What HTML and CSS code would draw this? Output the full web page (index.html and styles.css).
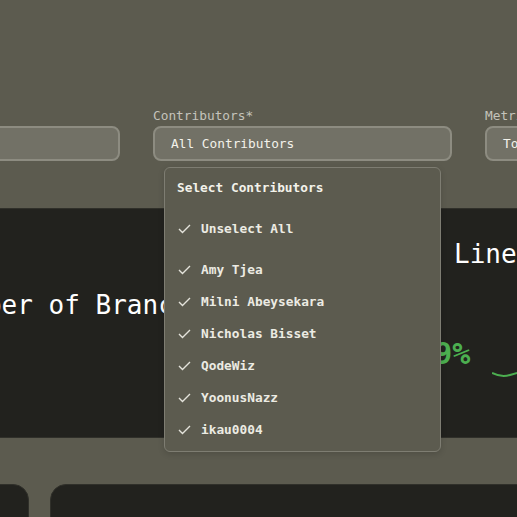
FILE: index.html
```html
<!DOCTYPE html>
<html>
<head>
<meta charset="utf-8">
<link rel="stylesheet" href="styles.css">
</head>
<body>
<div class="page">
  <div class="filters">
    <div class="field">
      <div class="label">Repository*</div>
      <div class="input">All Repositories</div>
    </div>
    <div class="field field-open">
      <div class="label">Contributors*</div>
      <div class="input">All Contributors</div>
      <div class="dropdown">
        <div class="dd-title">Select Contributors</div>
        <div class="dd-item dd-all"><svg class="check" viewBox="0 0 13 10" width="13" height="10"><polyline points="1,5 4.5,8.5 12,1"/></svg>Unselect All</div>
        <div class="dd-list">
          <div class="dd-item"><svg class="check" viewBox="0 0 13 10" width="13" height="10"><polyline points="1,5 4.5,8.5 12,1"/></svg>Amy Tjea</div>
          <div class="dd-item"><svg class="check" viewBox="0 0 13 10" width="13" height="10"><polyline points="1,5 4.5,8.5 12,1"/></svg>Milni Abeysekara</div>
          <div class="dd-item"><svg class="check" viewBox="0 0 13 10" width="13" height="10"><polyline points="1,5 4.5,8.5 12,1"/></svg>Nicholas Bisset</div>
          <div class="dd-item"><svg class="check" viewBox="0 0 13 10" width="13" height="10"><polyline points="1,5 4.5,8.5 12,1"/></svg>QodeWiz</div>
          <div class="dd-item"><svg class="check" viewBox="0 0 13 10" width="13" height="10"><polyline points="1,5 4.5,8.5 12,1"/></svg>YoonusNazz</div>
          <div class="dd-item"><svg class="check" viewBox="0 0 13 10" width="13" height="10"><polyline points="1,5 4.5,8.5 12,1"/></svg>ikau0004</div>
        </div>
      </div>
    </div>
    <div class="field">
      <div class="label">Metric</div>
      <div class="input">Total</div>
    </div>
  </div>

  <div class="cards">
    <div class="card card-left">
      <div class="card-title">Number of Branches</div>
    </div>
    <div class="card card-right">
      <div class="card-title title-right">Lines Changed</div>
      <div class="stat-row">
        <div class="stat">12.9%</div>
        <svg class="spark" width="120" height="30" viewBox="0 0 120 30"><path d="M0 16 C6 19, 12 20, 18 18 S30 14, 40 14 S80 10, 120 8"/></svg>
      </div>
    </div>
  </div>

  <div class="cards cards-bottom">
    <div class="card card-b1"></div>
    <div class="card card-b2"></div>
  </div>
</div>
</body>
</html>
```

FILE: styles.css
```css
html, body {
  margin: 0;
  padding: 0;
  background: #5c5b4f;
  overflow: hidden;
}
body {
  font-family: "DejaVu Sans Mono", "Liberation Mono", monospace;
  width: 517px;
  height: 517px;
}
.page {
  width: 517px;
  height: 517px;
  overflow: hidden;
}
.filters {
  display: flex;
  gap: 33px;
  margin-left: -179px;
  padding-top: 108px;
}
.field {
  width: 299px;
  flex: none;
  position: relative;
}
.label {
  font-size: 12.8px;
  line-height: 16px;
  color: #c4c3bb;
  margin-bottom: 2px;
}
.input {
  box-sizing: border-box;
  height: 35px;
  border: 2px solid #8d8c81;
  border-radius: 8px;
  background: #727166;
  color: #f3f2ea;
  font-size: 12.8px;
  line-height: 31px;
  padding-left: 16px;
  white-space: nowrap;
  overflow: hidden;
}
.dropdown {
  position: absolute;
  left: 11px;
  top: calc(100% + 6px);
  width: 277px;
  box-sizing: border-box;
  background: #5c5b4f;
  border: 1px solid #7e7d72;
  border-radius: 6px;
  padding: 12px 12px 13px;
  z-index: 10;
  box-shadow: 0 2px 6px rgba(0,0,0,0.15);
  color: #f3f2ea;
}
.dd-title {
  font-size: 12.8px;
  line-height: 16px;
  font-weight: bold;
  margin-bottom: 25px;
}
.dd-item {
  display: flex;
  align-items: center;
  font-size: 12.8px;
  line-height: 16px;
  font-weight: bold;
  color: #ecebe3;
}
.dd-all {
  margin-bottom: 25px;
}
.dd-list {
  display: flex;
  flex-direction: column;
  gap: 16px;
}
.check {
  flex: none;
  margin-left: 1px;
  margin-right: 10px;
  fill: none;
  stroke: #e4e3db;
  stroke-width: 1.4;
}
.cards {
  display: flex;
  gap: 21px;
  margin-left: -250px;
  margin-top: 47px;
  height: 230px;
}
.card {
  box-sizing: border-box;
  background: #22221e;
  border: 1px solid #30302a;
  border-radius: 16px;
  color: #ffffff;
  flex: none;
}
.card-left {
  width: 540px;
  padding: 80px 0 0 188px;
}
.card-right {
  width: 600px;
  padding: 29px 0 0 68px;
}
.card-title {
  font-size: 26px;
  line-height: 32px;
  white-space: nowrap;
}
.title-right {
  margin-left: 74px;
}
.stat-row {
  display: flex;
  align-items: flex-start;
  margin-top: 67px;
}
.stat {
  font-size: 30px;
  line-height: 34px;
  font-weight: bold;
  color: #4caf50;
}
.spark {
  margin-left: 22px;
  margin-top: 20px;
  fill: none;
  stroke: #4caf50;
  stroke-width: 2;
}
.cards-bottom {
  margin-left: -300px;
  margin-top: 46px;
  height: 120px;
}
.card-b1 {
  width: 329px;
}
.card-b2 {
  width: 600px;
}
```
